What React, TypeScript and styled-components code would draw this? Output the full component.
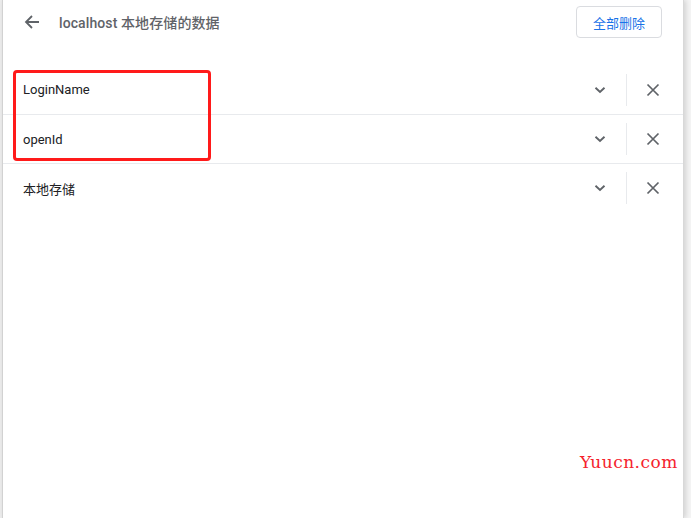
import React from "react";
import styled, { createGlobalStyle } from "styled-components";

const Global = createGlobalStyle`
  html, body { margin: 0; padding: 0; background: #ffffff; }
  body { font-family: Roboto, "Noto Sans CJK SC", sans-serif; }
`;

const Page = styled.div`
  position: relative;
  width: 691px;
  height: 518px;
  display: flex;
  background: linear-gradient(to right, #ececec 0, #ececec 2px, #f4f4f4 2px, #f4f4f4 100%);
  overflow: hidden;
`;

const Frame = styled.div`
  margin-left: 2px;
  width: 680px;
  height: 100%;
  background: #fff;
  border-left: 1px solid #d2d2d2;
  border-right: 1px solid #d8d8d8;
  box-shadow: 2px 0 5px rgba(0, 0, 0, 0.14);
  display: flex;
  flex-direction: column;
`;

const Header = styled.div`
  height: 43px;
  display: flex;
  align-items: center;
  padding: 0 21px 0 21px;
`;

const BackButton = styled.button`
  width: 16px;
  height: 24px;
  padding: 0;
  border: none;
  background: none;
  display: flex;
  align-items: center;
  justify-content: center;
  color: #5f6368;
`;

const Title = styled.h1`
  margin: 0 0 0 19px;
  font-size: 14px;
  font-weight: 500;
  color: #5f6368;
  flex: 1;
  letter-spacing: 0.1px;
`;

const OutlineButton = styled.button`
  width: 86px;
  height: 32px;
  margin-top: 1px;
  border: 1px solid #dadce0;
  border-radius: 4px;
  background: #fff;
  color: #1a73e8;
  font-family: Roboto, "Noto Sans CJK SC", sans-serif;
  font-size: 13px;
  padding: 0;
`;

const List = styled.div`
  margin-top: 22px;
  display: flex;
  flex-direction: column;
`;

const Row = styled.div`
  height: 49px;
  display: flex;
  align-items: center;
  padding-left: 20px;
  padding-right: 4px;
  & + & {
    border-top: 1px solid #e8eaed;
    height: 48px;
  }
`;

const Label = styled.span`
  flex: 1;
  font-size: 13px;
  color: #202124;
`;

const IconButton = styled.button<{ $w: number }>`
  width: ${(p) => p.$w}px;
  height: 32px;
  padding: 0;
  border: none;
  background: none;
  display: flex;
  align-items: center;
  justify-content: center;
  color: #5f6368;
`;

const Divider = styled.div`
  width: 1px;
  height: 32px;
  background: #e8eaed;
  margin-left: 6px;
`;

const Highlight = styled.div`
  position: absolute;
  left: 13px;
  top: 70px;
  width: 192px;
  height: 85px;
  border: 3px solid #ff1a1a;
  border-radius: 4px;
  pointer-events: none;
`;

const Watermark = styled.div`
  position: absolute;
  left: 580px;
  top: 452px;
  font-family: "DejaVu Serif", "Liberation Serif", serif;
  font-size: 17px;
  color: #f5222d;
  letter-spacing: 0.5px;
`;

const Chevron = () => (
  <svg width="12" height="8" viewBox="0 0 12 8">
    <path d="M1.5 1.8 L6 6 L10.5 1.8" fill="none" stroke="currentColor" strokeWidth="1.9" />
  </svg>
);

const Cross = () => (
  <svg width="14" height="14" viewBox="0 0 14 14">
    <path d="M1.5 1.5 L12.5 12.5 M12.5 1.5 L1.5 12.5" fill="none" stroke="currentColor" strokeWidth="1.7" />
  </svg>
);

const Arrow = () => (
  <svg width="16" height="16" viewBox="0 0 16 16">
    <path d="M15 8 H2 M8 2 L2 8 L8 14" fill="none" stroke="currentColor" strokeWidth="1.8" />
  </svg>
);

const items = ["LoginName", "openId", "本地存储"];

export default function App() {
  return (
    <>
      <Global />
      <Page>
        <Frame>
          <Header>
            <BackButton aria-label="back">
              <Arrow />
            </BackButton>
            <Title>localhost 本地存储的数据</Title>
            <OutlineButton>全部删除</OutlineButton>
          </Header>
          <List>
            {items.map((name) => (
              <Row key={name}>
                <Label>{name}</Label>
                <IconButton $w={40}>
                  <Chevron />
                </IconButton>
                <Divider />
                <IconButton $w={52}>
                  <Cross />
                </IconButton>
              </Row>
            ))}
          </List>
        </Frame>
        <Highlight />
        <Watermark>Yuucn.com</Watermark>
      </Page>
    </>
  );
}
